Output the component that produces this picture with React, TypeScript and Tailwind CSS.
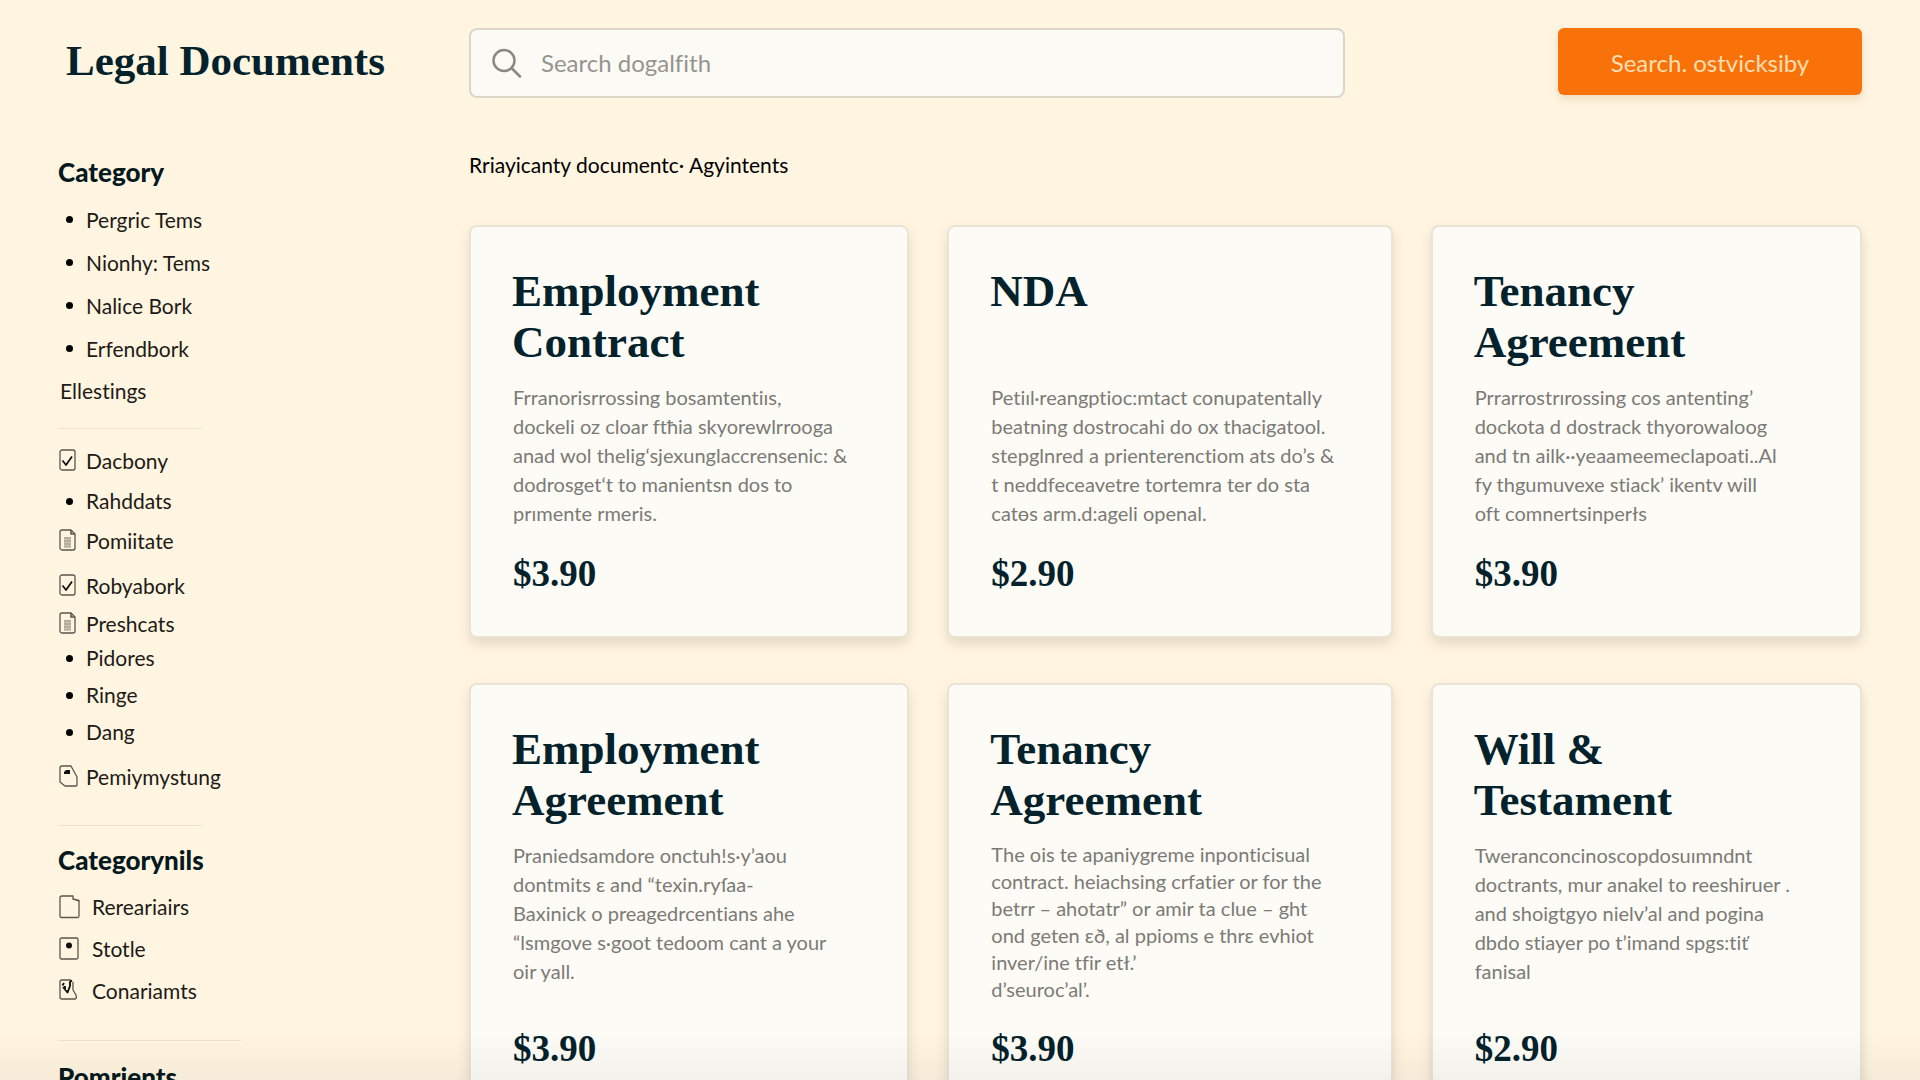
import type { ReactNode } from "react";
import clsx from "clsx";

type IconName = "bullet" | "check" | "lines" | "tag" | "page" | "dot" | "scribble";

type NavItem = { label: string; icon: IconName };

const TOP_ITEMS: NavItem[] = [
  { label: "Pergric Tems", icon: "bullet" },
  { label: "Nionhy: Tems", icon: "bullet" },
  { label: "Nalice Bork", icon: "bullet" },
  { label: "Erfendbork", icon: "bullet" },
];

const FILTER_GROUPS: { className: string; items: NavItem[] }[] = [
  {
    className: "mt-3 auto-rows-[40px]",
    items: [
      { label: "Dacbony", icon: "check" },
      { label: "Rahddats", icon: "bullet" },
      { label: "Pomiitate", icon: "lines" },
    ],
  },
  {
    className: "mt-1.5 auto-rows-[38px]",
    items: [
      { label: "Robyabork", icon: "check" },
      { label: "Preshcats", icon: "lines" },
    ],
  },
  {
    className: "auto-rows-[30px] gap-y-[7px]",
    items: [
      { label: "Pidores", icon: "bullet" },
      { label: "Ringe", icon: "bullet" },
      { label: "Dang", icon: "bullet" },
    ],
  },
  {
    className: "mt-2.5 auto-rows-[40px]",
    items: [{ label: "Pemiymystung", icon: "tag" }],
  },
];

const MORE_ITEMS: NavItem[] = [
  { label: "Rereariairs", icon: "page" },
  { label: "Stotle", icon: "dot" },
  { label: "Conariamts", icon: "scribble" },
];

const DOCUMENTS = [
  {
    title: "Employment\nContract",
    text: "Frranorisrrossing bosamtentiıs,\ndockeli oz cloar ftħia skyorewlrrooga\nanad wol thelig‘sjexunglaccrensenic: &\ndodrosget‘t to manientsn dos to\nprımente rmeris.",
    price: "$3.90",
  },
  {
    title: "NDA",
    text: "Petiıl·reangptioc:mtact conupatentally\nbeatning dostrocahi do ox thacigatool.\nstepglnred a prienterenctiom ats do’s &\nt neddfeceavetre tortemra ter do sta\ncatɵs arm.d:ageli openal.",
    price: "$2.90",
  },
  {
    title: "Tenancy\nAgreement",
    text: "Prrarrostrırossing cos antenting’\ndockota d dostrack thyorowaloog\nand tn ailk··yeaameemeclapoati..Al\nfy thgumuvexe stiack’ ikentv will\noft comnertsinperłs",
    price: "$3.90",
  },
  {
    title: "Employment\nAgreement",
    text: "Praniedsamdore onctuh!s·y’aou\ndontmits ε and “texin.ryſaa-\nBaxinick o preagedrcentians ahe\n“lsmgove s·goot tedoom cant a your\noir yall.",
    price: "$3.90",
  },
  {
    title: "Tenancy\nAgreement",
    text: "The ois te apaniygreme inponticisual\ncontract. heiachsing crfatier or for the\nbetrr – ahotatr” or amir ta clue – ght\nond geten ɛð, al ppioms e thrɛ evhiot\ninver/ine tfir etł.’\nd’seuroc’al’.",
    price: "$3.90",
    dense: true,
  },
  {
    title: "Will &\nTestament",
    text: "Tweranconcinoscopdosuımndnt\ndoctrants, mur anakel to reeshiruer .\nand shoigtgyo nielv’al and pogina\ndbdo stiayer po t’imand spgs:tiť\nfanisal",
    price: "$2.90",
  },
];

function NavIcon({ name }: { name: IconName }) {
  if (name === "bullet") {
    return <span className="ml-[7px] block size-[7px] rounded-full bg-black" />;
  }

  const shapes: Record<Exclude<IconName, "bullet">, ReactNode> = {
    check: (
      <>
        <rect x="1" y="1" width="15" height="20" rx="2" />
        <path d="M3.5 11.5 7 16l6-8.500" stroke="#111" strokeWidth="1.800" />
      </>
    ),
    lines: (
      <>
        <path d="M3 1h9l4 4v14a2 2 0 0 1-2 2H3a2 2 0 0 1-2-2V3a2 2 0 0 1 2-2Z" />
        <path d="M12 1.500V5h4" strokeWidth="1.600" />
        <path d="M5 8h7v10H5z" fill="#cdc5b3" stroke="none" />
        <path d="M5 9h7M5 12h7M5 15h7M5 18h7" stroke="#8d8677" strokeWidth="0.800" />
      </>
    ),
    tag: (
      <>
        <path d="M3 1h9l6 11v8a1 1 0 0 1-1 1H6l-5-4V3a2 2 0 0 1 2-2Z" />
        <path d="M5 7 7 5h4v4H5z" fill="#111" stroke="none" />
      </>
    ),
    page: <path d="M3 1h11v3l6 1.500V21a1.500 1.500 0 0 1-1.500 1.500h-16A1.500 1.500 0 0 1 1 21V3a2 2 0 0 1 2-2Zm11 3 5.500 2" />,
    dot: (
      <>
        <rect x="1" y="1" width="18" height="21" rx="1.500" />
        <circle cx="10" cy="8.500" r="3" fill="#111" stroke="none" />
      </>
    ),
    scribble: (
      <>
        <path d="M12 1H3a2 2 0 0 0-2 2v15a2 2 0 0 0 2 2h13q2 0 1-4l-3-5V3" />
        <path d="M3.500 6.500 5 4M4 8l4.500 5.500L11 7V3l2-1.500M6 7v4" stroke="#111" strokeWidth="1.900" />
      </>
    ),
  };

  return (
    <svg
      aria-hidden="true"
      className="block h-6 w-[22px]"
      viewBox="0 0 22 24"
      fill="none"
      stroke="#5b564c"
      strokeWidth="1.300"
      strokeLinejoin="round"
    >
      {shapes[name]}
    </svg>
  );
}

function NavList({ items, className, wide }: { items: NavItem[]; className: string; wide?: boolean }) {
  return (
    <ul className={clsx("grid pl-px", className)}>
      {items.map((item) => (
        <li key={item.label} className="flex items-center">
          <a
            href="#"
            className={clsx("grid items-center", wide ? "grid-cols-[33px_auto]" : "grid-cols-[27px_auto]")}
          >
            <NavIcon name={item.icon} />
            {item.label}
          </a>
        </li>
      ))}
    </ul>
  );
}

function DocumentCard({ title, text, price, dense }: (typeof DOCUMENTS)[number]) {
  return (
    <article className="flex flex-col rounded-lg border-2 border-[#ebe3d3] bg-[#fdfbf5] pt-[39px] pr-2 pb-[42px] pl-[41px] shadow-[0_6px_12px_rgba(100,85,55,0.17)]">
      <h2 className="min-h-[102px] font-['Liberation_Serif',serif] text-[45px] leading-[51px] font-bold whitespace-pre-line text-[#04222b]">
        {title}
      </h2>
      <p
        className={clsx(
          "mt-[15px] pl-px text-[20px] whitespace-pre-line text-[#7b7a76]",
          dense ? "leading-[27px]" : "leading-[29px]",
        )}
      >
        {text}
      </p>
      <p className="mt-auto pt-[26px] pl-px font-['Liberation_Serif',serif] text-[37px] leading-10 font-bold text-[#04222b]">
        {price}
      </p>
    </article>
  );
}

export default function App() {
  return (
    <div className="min-h-screen bg-[#fff5e1] px-[58px] pt-7 pb-12 font-[Lato,sans-serif] text-[#1d1b16] [font-variant-ligatures:none]">
      <header className="flex items-start">
        <h1 className="w-[411px] shrink-0 pt-[7px] pl-2 font-['Liberation_Serif',serif] text-[43px] leading-[51px] font-bold text-[#04222b]">
          Legal Documents
        </h1>
        <label className="flex h-[70px] max-w-[876px] flex-1 items-center gap-[18px] rounded-lg border-2 border-[#dcd6c9] bg-[#fcfaf4] px-5">
          <svg
            aria-hidden="true"
            className="size-8 shrink-0"
            viewBox="0 0 32 32"
            fill="none"
            stroke="#8a8883"
            strokeWidth="2.500"
            strokeLinecap="round"
          >
            <circle cx="13" cy="13.500" r="10.500" />
            <path d="m21 21.500 8 8" />
          </svg>
          <input
            type="search"
            aria-label="Search documents"
            placeholder="Search dogalfith"
            className="w-full bg-transparent text-[24px] outline-none placeholder:text-[#96948f]"
          />
        </label>
        <button
          type="button"
          className="ml-auto h-[67px] w-[304px] shrink-0 rounded-md bg-[#f97109] pt-0.5 text-[24px] text-[#ffdfb4] shadow-[0_4px_8px_rgba(150,90,20,0.16)]"
        >
          Search. ostvicksiby
        </button>
      </header>

      <div className="mt-[51px] flex items-start">
        <aside className="w-[411px] shrink-0 text-[21px] leading-6">
          <h2 className="pt-[7px] text-[26px] leading-8 font-black text-[#06191c]">Category</h2>
          <NavList items={TOP_ITEMS} className="mt-2.5 auto-rows-[43px]" />
          <a href="#" className="mt-[9px] block w-fit pl-0.5">
            Ellestings
          </a>
          <hr className="mt-[25px] w-[144px] border-[#eee3cf]" />
          {FILTER_GROUPS.map((group) => (
            <NavList key={group.items[0].label} items={group.items} className={group.className} />
          ))}
          <hr className="mt-7 w-[144px] border-[#eee3cf]" />
          <h2 className="mt-[18px] text-[26px] leading-8 font-black text-[#06191c]">Categorynils</h2>
          <NavList items={MORE_ITEMS} className="mt-2.5 auto-rows-[42px]" wide />
          <hr className="mt-7 w-[183px] border-[#eee3cf]" />
          <h2 className="mt-5 text-[26px] leading-8 font-black text-[#06191c]">Pomrients</h2>
        </aside>

        <main className="min-w-0 flex-1">
          <p className="text-[21px] leading-8 text-black">Rriayicanty documentc· Agyintents</p>
          <div className="mt-11 grid grid-cols-[440fr_445fr_431fr] gap-x-[38px] gap-y-[45px]">
            {DOCUMENTS.map((doc, index) => (
              <DocumentCard key={index} {...doc} />
            ))}
          </div>
        </main>
      </div>

      <div className="pointer-events-none fixed inset-x-0 bottom-0 h-12 bg-linear-to-t from-black/4 to-transparent" />
    </div>
  );
}
